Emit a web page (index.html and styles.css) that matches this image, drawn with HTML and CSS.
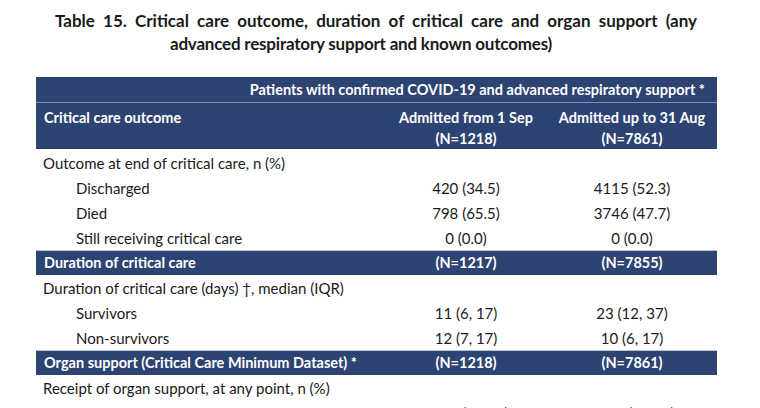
FILE: index.html
```html
<!DOCTYPE html>
<html>
<head>
<meta charset="utf-8">
<link rel="stylesheet" href="styles.css">
</head>
<body>
<div class="page">
  <h1 class="title"><span class="l1">Table 15. Critical care outcome, duration of critical care and organ support (any</span><span class="l2">advanced respiratory support and known outcomes)</span></h1>
  <table class="tbl">
    <colgroup>
      <col class="c1"><col class="c2"><col class="c3">
    </colgroup>
    <thead>
      <tr class="top">
        <th colspan="3" class="span">Patients with confirmed COVID-19 and advanced respiratory support *</th>
      </tr>
      <tr class="sub">
        <th class="lab">Critical care outcome</th>
        <th class="num">Admitted from 1 Sep<br>(N=1218)</th>
        <th class="num">Admitted up to 31 Aug<br>(N=7861)</th>
      </tr>
    </thead>
    <tbody>
      <tr class="first"><td>Outcome at end of critical care, n (%)</td><td></td><td></td></tr>
      <tr><td class="ind">Discharged</td><td class="num">420 (34.5)</td><td class="num">4115 (52.3)</td></tr>
      <tr><td class="ind">Died</td><td class="num">798 (65.5)</td><td class="num">3746 (47.7)</td></tr>
      <tr><td class="ind">Still receiving critical care</td><td class="num">0 (0.0)</td><td class="num">0 (0.0)</td></tr>
      <tr class="band"><th class="lab">Duration of critical care</th><th class="num">(N=1217)</th><th class="num">(N=7855)</th></tr>
      <tr><td>Duration of critical care (days) †, median (IQR)</td><td></td><td></td></tr>
      <tr><td class="ind">Survivors</td><td class="num">11 (6, 17)</td><td class="num">23 (12, 37)</td></tr>
      <tr><td class="ind">Non-survivors</td><td class="num">12 (7, 17)</td><td class="num">10 (6, 17)</td></tr>
      <tr class="band"><th class="lab">Organ support (Critical Care Minimum Dataset) *</th><th class="num">(N=1218)</th><th class="num">(N=7861)</th></tr>
      <tr><td>Receipt of organ support, at any point, n (%)</td><td></td><td></td></tr>
      <tr><td class="ind">Advanced respiratory support</td><td class="num">1218 (100.0)</td><td class="num">7861 (100.0)</td></tr>
    </tbody>
  </table>
</div>
</body>
</html>
```
FILE: styles.css
```css
html, body {
  margin: 0;
  padding: 0;
  background: #ffffff;
}
body {
  font-family: Lato, "Open Sans", sans-serif;
  color: #1a1a1a;
  overflow: hidden;
  height: 408px;
}
.page {
  padding: 9px 0 0 36px;
}
.title {
  margin: 0 0 22px 0;
  font-size: 17px;
  line-height: 23px;
  font-weight: 700;
  color: #1a1a1a;
}
.l1 {
  display: block;
  width: 642px;
  margin-left: 19px;
  text-align: justify;
  text-align-last: justify;
}
.l2 {
  display: block;
  width: 650px;
  text-align: center;
  letter-spacing: -0.2px;
}
.tbl {
  width: 681px;
  border-collapse: collapse;
  table-layout: fixed;
  font-size: 14.5px;
}
.c1 { width: 349px; }
.c2 { width: 162px; }
.c3 { width: 170px; }
.tbl th {
  background: #2d4372;
  color: #ffffff;
  font-weight: 700;
}
.top th {
  padding: 0 12px 0 0;
  text-align: right;
  line-height: 25px;
  border-bottom: 1px solid #7f8fb2;
}
.sub th {
  padding: 5px 8px 0 8px;
  line-height: 20.5px;
  vertical-align: top;
}
.tbl th.lab {
  text-align: left;
  padding-left: 8px;
}
.tbl .num {
  text-align: center;
}
.tbl td {
  padding: 2px 0 0 7px;
  line-height: 23px;
  font-size: 15px;
}
.tbl .first td {
  padding-top: 3px;
  line-height: 23px;
}
.tbl td.num {
  padding-left: 0;
}
.tbl td.ind {
  padding-left: 40px;
}
.band th {
  padding: 0;
  line-height: 24px;
  border-top: 1px solid #b9c3d8;
}
```
